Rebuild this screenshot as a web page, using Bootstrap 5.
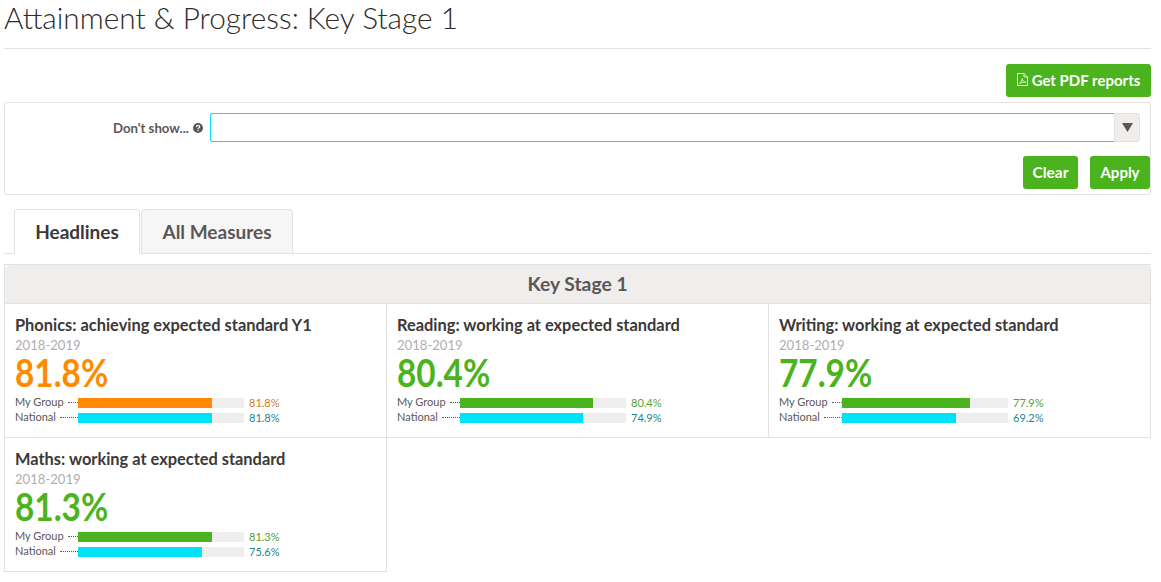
<!DOCTYPE html>
<html lang="en">
<head>
<meta charset="utf-8">
<title>Attainment &amp; Progress</title>
<link href="https://cdn.jsdelivr.net/npm/bootstrap@5.3.0/dist/css/bootstrap.min.css" rel="stylesheet">
<style>
body { font-family: "Lato", "Liberation Sans", sans-serif; color: #3c3838; background: #fff; overflow: hidden; }
.pg { margin: 0 10px 0 4px; }
.pg-title { font-size: 29.8px; font-weight: 300; line-height: 34px; margin: 0; padding: 1px 0 13px; border-bottom: 1px solid #e3e1e1; color: #2e2b2b; height: 49px; }
.btn-grn { background: #4ab31d; border: 0; color: #fff; font-weight: 700; font-size: 15px; line-height: 20px; border-radius: 3px; padding: 0 0 2px; height: 33px; display: inline-flex; align-items: center; justify-content: center; gap: 4px; }
.btn-grn:hover { background: #4ab31d; color: #fff; }
.pdf-btn { width: 145px; }
.btn-clear { width: 55px; font-size: 15.5px; }
.btn-apply { width: 60px; }
.top-act { padding: 15px 0 5px; height: 53px; }
.filter-box { border: 1px solid #e3e1e1; border-radius: 3px; height: 93px; padding: 10px 0 0; margin-bottom: 14px; }
.filter-lbl { flex: 0 0 205px; padding: 2px 7px 0 0; font-size: 13.2px; font-weight: 700; color: #5c5757; }
.filter-in { flex: 1 1 0; width: auto; min-width: 0; height: 29px; border: 1px solid #0adcf0; border-right: 0; border-radius: 3px 0 0 3px; padding: 0; box-shadow: none; }
.filter-arrow { flex: 0 0 26px; height: 29px; background: #efeeed; border: 1px solid #e3e1e1; border-radius: 0 3px 3px 0; display: flex; align-items: center; justify-content: center; }
.filter-row { margin-right: 10px; }
.filter-acts { margin-top: 14px; gap: 12px; }
.tabs-x { padding-left: 10px; border-bottom-color: #e3e1e1; height: 45px; margin-bottom: 10px; flex-wrap: nowrap; gap: 1px; }
.tabs-x .nav-link { height: 45px; font-size: 19px; line-height: 24px; font-weight: 700; border-radius: 4px 4px 0 0; border: 1px solid #e3e1e1; background: #f6f6f6; color: #5c5757; padding: 10px 0; width: 152px; text-align: center; margin: 0; }
.tabs-x .nav-link.active { background: #fff; color: #3c3838; border-bottom-color: #fff; width: 126px; }
.ks-panel { border: 1px solid #e3e1e1; border-right: 0; border-bottom: 0; }
.ks-head { background: #efeeed; border-bottom: 1px solid #e3e1e1; border-right: 1px solid #e3e1e1; height: 39px; line-height: 38px; text-align: center; font-size: 19.3px; font-weight: 700; color: #5c5757; padding: 0; border-radius: 3px 3px 0 0; }
.tiles { margin: 0; display: grid; grid-template-columns: 382px 382px 382px; }
.tile { height: 134px; padding: 11px 10px 0; border-right: 1px solid #e3e1e1; border-bottom: 1px solid #e3e1e1; }
.tile-t { font-size: 16.4px; font-weight: 700; line-height: 20px; margin: 0; color: #3c3838; white-space: nowrap; }
.tile-y { font-size: 13.1px; line-height: 18px; margin: 1px 0 0; color: #b1adad; }
.tile-v { font-size: 39px; font-weight: 700; line-height: 37px; height: 41px; transform: scaleX(.855); transform-origin: left center; }
.orange { color: #ff8a00; }
.green { color: #4ab31d; }
.mrow { display: grid; grid-template-columns: 63px 166px auto; align-items: center; height: 15px; font-size: 11px; line-height: 13px; color: #5c5757; }
.mlab { display: flex; align-items: center; gap: 4px; white-space: nowrap; padding-bottom: 2px; }
.mlab::after { content: ""; flex: 1; border-top: 1px dotted #5c5757; margin-top: 2px; }
.mtrack { height: 10px; background: #efeeed; display: block; border-radius: 0; }
.mfill { height: 100%; display: block; }
.bg-o { background: #ff8a00; }
.bg-g { background: #4ab31d; }
.bg-c { background: #00e1fa; }
.mval { padding-left: 5px; }
.v-o { color: #cf7d1f; }
.v-g { color: #55a031; }
.v-c { color: #21858f; }
</style>
</head>
<body>
<div class="pg">
  <h1 class="pg-title">Attainment &amp; Progress: Key Stage 1</h1>
  <div class="top-act d-flex justify-content-end">
    <a class="btn btn-grn pdf-btn" href="#">
      <svg width="11" height="13" viewBox="0 0 11 13" fill="none" stroke="#dff3d4" stroke-width="1"><path d="M.5.5h6.5l3.5 3.5v8.500h-10z"/><path d="M7 .5v3.500h3.500"/><path d="M2.500 10.500c1.500-1 2.500-3 2.700-5 .3 2 1.500 3.500 3.500 3.700-2-.2-4.500.2-6.200 1.300z"/></svg>
      Get PDF reports
    </a>
  </div>
  <form class="filter-box">
    <div class="d-flex align-items-center filter-row">
      <label class="filter-lbl text-end d-flex justify-content-end align-items-center gap-1">Don't show...
        <svg width="10" height="10" viewBox="0 0 10 10"><circle cx="5" cy="5" r="5" fill="#5c5757"/><path d="M3.400 3.900c0-1 .8-1.500 1.700-1.500s1.600.5 1.600 1.400c0 1.200-1.700 1.100-1.700 2.100" fill="none" stroke="#fff" stroke-width="1.100"/><rect x="4.400" y="6.800" width="1.200" height="1.200" fill="#fff"/></svg>
      </label>
      <input class="form-control filter-in" type="text" aria-label="Don't show">
      <span class="filter-arrow"><svg width="11" height="9" viewBox="0 0 11 9"><path d="M0 0h11L5.500 9z" fill="#5c5757"/></svg></span>
    </div>
    <div class="d-flex justify-content-end filter-acts">
      <button type="button" class="btn btn-grn btn-clear">Clear</button>
      <button type="button" class="btn btn-grn btn-apply">Apply</button>
    </div>
  </form>
  <ul class="nav nav-tabs tabs-x">
    <li class="nav-item"><a class="nav-link active" href="#">Headlines</a></li>
    <li class="nav-item"><a class="nav-link" href="#">All Measures</a></li>
  </ul>
  <div class="card ks-panel rounded-0">
    <div class="card-header ks-head">Key Stage 1</div>
    <div class="tiles">
      <div class="tile">
        <h5 class="tile-t">Phonics: achieving expected standard Y1</h5>
        <p class="tile-y">2018-2019</p>
        <div class="tile-v orange">81.8%</div>
        <div class="mrow"><span class="mlab">My Group</span><span class="mtrack"><span class="mfill bg-o" style="width:80.8%"></span></span><span class="mval v-o">81.8%</span></div>
        <div class="mrow"><span class="mlab">National</span><span class="mtrack"><span class="mfill bg-c" style="width:80.8%"></span></span><span class="mval v-c">81.8%</span></div>
      </div>
      <div class="tile">
        <h5 class="tile-t">Reading: working at expected standard</h5>
        <p class="tile-y">2018-2019</p>
        <div class="tile-v green">80.4%</div>
        <div class="mrow"><span class="mlab">My Group</span><span class="mtrack"><span class="mfill bg-g" style="width:80.1%"></span></span><span class="mval v-g">80.4%</span></div>
        <div class="mrow"><span class="mlab">National</span><span class="mtrack"><span class="mfill bg-c" style="width:74.1%"></span></span><span class="mval v-c">74.9%</span></div>
      </div>
      <div class="tile">
        <h5 class="tile-t">Writing: working at expected standard</h5>
        <p class="tile-y">2018-2019</p>
        <div class="tile-v green">77.9%</div>
        <div class="mrow"><span class="mlab">My Group</span><span class="mtrack"><span class="mfill bg-g" style="width:77.1%"></span></span><span class="mval v-g">77.9%</span></div>
        <div class="mrow"><span class="mlab">National</span><span class="mtrack"><span class="mfill bg-c" style="width:68.7%"></span></span><span class="mval v-c">69.2%</span></div>
      </div>
      <div class="tile">
        <h5 class="tile-t">Maths: working at expected standard</h5>
        <p class="tile-y">2018-2019</p>
        <div class="tile-v green">81.3%</div>
        <div class="mrow"><span class="mlab">My Group</span><span class="mtrack"><span class="mfill bg-g" style="width:80.8%"></span></span><span class="mval v-g">81.3%</span></div>
        <div class="mrow"><span class="mlab">National</span><span class="mtrack"><span class="mfill bg-c" style="width:74.8%"></span></span><span class="mval v-c">75.6%</span></div>
      </div>
    </div>
  </div>
</div>
<script src="https://cdn.jsdelivr.net/npm/bootstrap@5.3.0/dist/js/bootstrap.bundle.min.js"></script>
</body>
</html>
